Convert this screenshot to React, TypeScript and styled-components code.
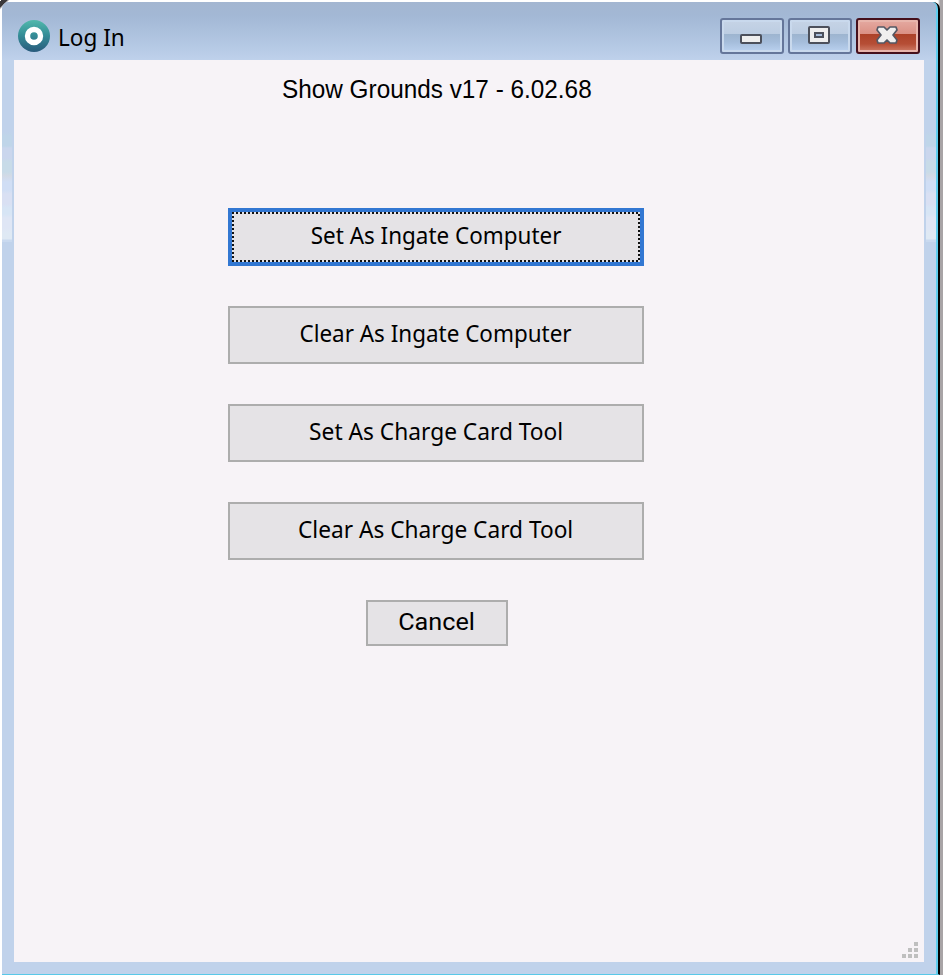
import React from "react";
import styled, { createGlobalStyle, css } from "styled-components";

const GlobalStyle = createGlobalStyle`
  * { box-sizing: border-box; }
  body { margin: 0; background: #fff; overflow: hidden; }
`;

const Desktop = styled.div`
  width: 943px;
  height: 975px;
  padding: 2px 0 0 2px;
  display: flex;
  background:
    linear-gradient(135deg, #fff 0 1px, #3a383b 1px 5px, #b7b4b8 6px, transparent 7px) left top / 10px 10px no-repeat,
    linear-gradient(90deg, #fff 0 938px, #a8a4a6 940px);
`;

const WindowFrame = styled.section`
  width: 938px;
  height: 973px;
  flex: none;
  display: grid;
  grid-template-rows: 58px 902px;
  grid-template-columns: 12px 910px 12px;
  background: #c0d2eb;
  border-right: 2px solid #000;
  border-bottom: 1px solid #58c8e8;
  border-radius: 7px 7px 0 0;
  box-shadow: inset -2px 0 #5fcdee;
`;

const TitleBar = styled.header`
  grid-column: 1 / -1;
  display: flex;
  align-items: flex-start;
  padding: 16px 16px 0 16px;
  background: linear-gradient(#a3b6d1 0, #a3b8d5 14px, #abc0dc 28px, #b6cae5 46px, #bfd1eb 58px);
  border-radius: 7px 5px 0 0;
`;

const Title = styled.h1`
  margin: 3px auto 0 8px;
  font: 400 24px/32px "Noto Sans", sans-serif;
  color: #000;
  transform: scaleX(0.94);
  transform-origin: left;
`;

const Controls = styled.div`
  display: flex;
  gap: 4px;
`;

const ControlButton = styled.button<{ $danger?: boolean }>`
  width: 64px;
  height: 36px;
  padding: 0 2px 2px 0;
  display: grid;
  place-items: center;
  border: 2px solid #65769a;
  border-radius: 3px;
  background: linear-gradient(#c6d4e6 0, #bccde2 14px, #9db4cf 14px, #a5bddb 22px, #bbd2f0 32px);
  box-shadow: inset 0 0 0 2px #c9d9ed;
  ${(p) => p.$danger && css`
    border-color: #45101c;
    background: linear-gradient(#e5aaa2 0, #da9084 14px, #ac4128 14px, #b64e36 24px, #d07f6b 32px);
    box-shadow: inset 0 0 0 2px #e8b5ac;
  `}
`;

const SideEdge = styled.div<{ $right?: boolean }>`
  padding: ${(p) => (p.$right ? "0 0 0 2px" : "0 2px 0 0")};
  &::before {
    content: "";
    display: block;
    height: 182px;
    background: linear-gradient(
      #c0d2eb 0 72px, #bfd5e9 76px 86px, #cad6ed 88px 98px, #c8dbe8 102px 112px,
      #d2dae6 116px, #d0def5 122px 130px, #d9e0f3 134px 144px, #d7e5f5 148px 154px,
      #dfe6f5 158px 168px, #dfe9f4 174px 179px, #c9d9ef 180px
    );
  }
`;

const Content = styled.main`
  background: #f7f3f7;
  display: flex;
  flex-direction: column;
  padding: 13px 6px 4px 214px;
`;

const Version = styled.p`
  margin: 0 0 103px 54px;
  height: 32px;
  font: 400 25px/32px "Liberation Sans", Arial, sans-serif;
  white-space: nowrap;
  color: #000;
  transform: scaleX(0.973);
  transform-origin: left;
`;

const Actions = styled.div`
  width: 416px;
  display: flex;
  flex-direction: column;
  gap: 40px;
`;

const ActionButton = styled.button<{ $focused?: boolean; $compact?: boolean }>`
  width: ${(p) => (p.$compact ? 142 : 416)}px;
  height: ${(p) => (p.$compact ? 46 : 58)}px;
  margin-left: ${(p) => (p.$compact ? 138 : 0)}px;
  padding: ${(p) => (p.$compact ? "0 0 2px" : "0 0 4px")};
  border: ${(p) => (p.$focused ? "4px solid #3277d2" : "2px solid #adadad")};
  background: #e5e3e6;
  color: #000;
  font: 400 24px/32px ${(p) => (p.$compact ? '"Roboto"' : '"Noto Sans"')}, sans-serif;
  ${(p) => p.$focused && css`
    background:
      repeating-linear-gradient(90deg, #111 0 2px, #e5e3e6 2px 4px) top / 100% 2px no-repeat,
      repeating-linear-gradient(90deg, #111 0 2px, #e5e3e6 2px 4px) bottom / 100% 2px no-repeat,
      repeating-linear-gradient(#111 0 2px, #e5e3e6 2px 4px) left / 2px 100% no-repeat,
      repeating-linear-gradient(#e5e3e6 0 2px, #111 2px 4px) right / 2px 100% no-repeat,
      #e5e3e6;
  `}
`;

const Label = styled.span<{ $scale: number }>`
  display: inline-block;
  white-space: nowrap;
  transform: scaleX(${(p) => p.$scale});
`;

const ResizeGrip = styled.svg`
  margin: auto 0 0 auto;
  display: block;
`;

const Logo = styled.svg`
  margin-top: 2px;
`;

const AppIcon = () => (
  <Logo width="32" height="32" viewBox="0 0 32 32">
    <defs>
      <linearGradient id="teal" x1="0" y1="0" x2="0" y2="1">
        <stop offset="0" stopColor="#52b9ac" />
        <stop offset=".45" stopColor="#358f98" />
        <stop offset="1" stopColor="#285a7c" />
      </linearGradient>
    </defs>
    <circle cx="16" cy="16" r="16" fill="url(#teal)" />
    <circle cx="16" cy="16" r="6.5" fill="none" stroke="#fff" strokeWidth="5.4" />
  </Logo>
);

const MinimizeIcon = () => (
  <svg width="22" height="18" viewBox="0 0 22 18">
    <rect x="1" y="9" width="20" height="8" rx="1" fill="#eee" stroke="#4c505b" strokeWidth="2" />
  </svg>
);

const MaximizeIcon = () => (
  <svg width="22" height="18" viewBox="0 0 22 18">
    <rect x="1" y="1" width="20" height="16" rx="1" fill="#eee" stroke="#4c505b" strokeWidth="2" />
    <rect x="7" y="7" width="8" height="4" fill="#a9bedb" stroke="#4c505b" strokeWidth="2" />
  </svg>
);

const CloseIcon = () => (
  <svg width="22" height="18" viewBox="0 0 22 18">
    <path
      d="M2 1h6l3 3 3-3h6l1 3-4 5 4 5-1 3h-6l-3-3-3 3H2l-1-3 4-5-4-5Z"
      fill="#f0efef" stroke="#545864" strokeWidth="1.7" strokeLinejoin="round"
    />
  </svg>
);

const gripDots = [[12, 0], [6, 6], [12, 6], [0, 12], [6, 12], [12, 12]];

export default function App() {
  return (
    <>
      <GlobalStyle />
      <Desktop>
        <WindowFrame>
          <TitleBar>
            <AppIcon />
            <Title>Log In</Title>
            <Controls>
              <ControlButton aria-label="Minimize"><MinimizeIcon /></ControlButton>
              <ControlButton aria-label="Maximize"><MaximizeIcon /></ControlButton>
              <ControlButton aria-label="Close" $danger><CloseIcon /></ControlButton>
            </Controls>
          </TitleBar>
          <SideEdge />
          <Content>
            <Version>Show Grounds v17 - 6.02.68</Version>
            <Actions>
              <ActionButton $focused><Label $scale={0.935}>Set As Ingate Computer</Label></ActionButton>
              <ActionButton><Label $scale={0.935}>Clear As Ingate Computer</Label></ActionButton>
              <ActionButton><Label $scale={0.947}>Set As Charge Card Tool</Label></ActionButton>
              <ActionButton><Label $scale={0.945}>Clear As Charge Card Tool</Label></ActionButton>
              <ActionButton $compact><Label $scale={1.05}>Cancel</Label></ActionButton>
            </Actions>
            <ResizeGrip width="16" height="16">
              {gripDots.map(([x, y]) => (
                <rect key={`${x}-${y}`} x={x} y={y} width="4" height="4" fill="#bfbfbf" />
              ))}
            </ResizeGrip>
          </Content>
          <SideEdge $right />
        </WindowFrame>
      </Desktop>
    </>
  );
}
